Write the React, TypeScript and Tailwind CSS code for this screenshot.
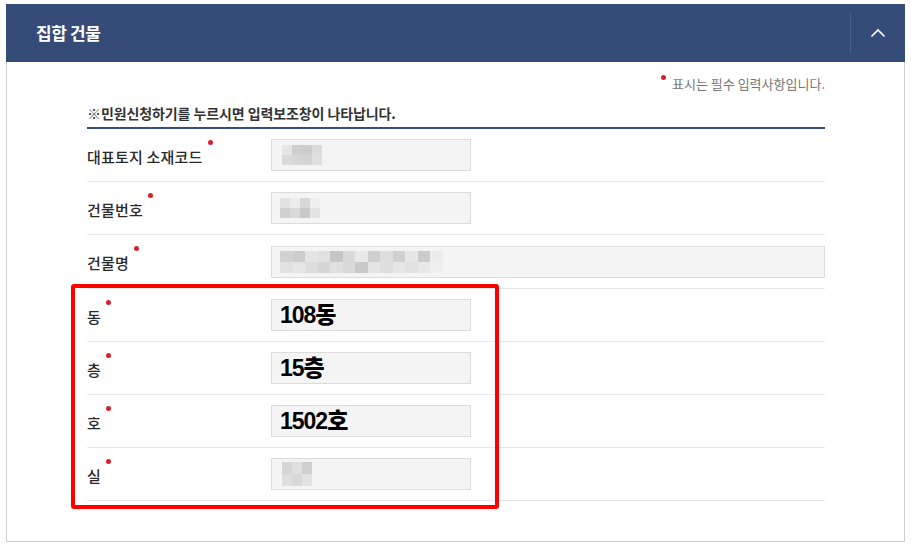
import React from "react";

const KR = { fontFamily: '"Noto Sans CJK KR", "Noto Sans", sans-serif' };

type Block = [number, number, number, number, string];

function Mosaic({ blocks, w, h }: { blocks: Block[]; w: number; h: number }) {
  return (
    <div className="relative" style={{ width: w, height: h }}>
      {blocks.map(([x, y, bw, bh, c], i) => (
        <div key={i} className="absolute" style={{ left: x, top: y, width: bw, height: bh, background: c }} />
      ))}
    </div>
  );
}

function mosaicRow(cols: string[], cell: number, y: number, h: number): Block[] {
  return cols.map((c, i) => [i * cell, y, cell, h, c] as Block);
}

const m1: Block[] = [
  ...mosaicRow(["#e6e6e6", "#cfcfcf", "#cdcdcd", "#dcdcdc"], 10, 0, 10),
  ...mosaicRow(["#dadada", "#d6d6d6", "#d4d4d4", "#e0e0e0"], 10, 10, 10),
];
const m2: Block[] = [
  ...mosaicRow(["#e2e2e2", "#ececec", "#d8d8d8", "#eeeeee"], 10, 0, 10),
  ...mosaicRow(["#cfcfcf", "#d9d9d9", "#c8c8c8", "#e3e3e3"], 10, 10, 10),
];
const m3: Block[] = [
  ...mosaicRow(["#d2d2d2", "#cccccc", "#e4e4e4", "#e0e0e0", "#c6c6c6", "#d8d8d8", "#e8e8e8", "#cfcfcf", "#dedede", "#d0d0d0", "#e6e6e6", "#cbcbcb", "#ececec"], 12.5, 0, 11),
  ...mosaicRow(["#e2e2e2", "#e6e6e6", "#dcdcdc", "#d6d6d6", "#e0e0e0", "#d9d9d9", "#c9c9c9", "#e4e4e4", "#dedede", "#e6e6e6", "#e2e2e2", "#e8e8e8", "#efefef"], 12.5, 11, 11),
];
const m7: Block[] = [
  ...mosaicRow(["#d6d6d6", "#e0e0e0", "#cfcfcf"], 10, 0, 12),
  ...mosaicRow(["#dedede", "#d8d8d8", "#e2e2e2"], 10, 12, 12),
];

function Dot() {
  return <span className="absolute left-[calc(100%+5px)] -top-[6px] h-[5px] w-[5px] rounded-full bg-[#d8202a]" />;
}

function Row({
  label,
  wide,
  tall,
  children,
}: {
  label: string;
  wide?: boolean;
  tall?: boolean;
  children?: React.ReactNode;
}) {
  return (
    <div className={`flex items-center border-b border-[#e8e8e8] ${tall ? "h-[54px]" : "h-[53px]"}`}>
      <div className="w-[184px] pt-[4px] text-[15px] font-medium tracking-[0.2px] text-[#2a2a2a]" style={KR}>
        <span className="relative inline-block leading-[22px]">
          {label}
          <Dot />
        </span>
      </div>
      <div
        className={`flex h-[32px] items-center border border-[#dcdcdc] bg-[#f4f4f4] pl-[8px] ${wide ? "flex-1" : "w-[200px]"}`}
      >
        {children}
      </div>
    </div>
  );
}

function BigVal({ text }: { text: string }) {
  return (
    <span
      className="text-[23px] font-black leading-none tracking-[-1px] text-black"
      style={{ fontFamily: '"Liberation Sans", "Noto Sans CJK KR", sans-serif' }}
    >
      {text}
    </span>
  );
}

export default function App() {
  return (
    <div className="relative min-h-[547px] w-[911px] bg-white pt-[4px]" style={KR}>
      <div className="mx-[6px] border-x border-b border-[#cfcfcf]">
        {/* Header */}
        <div className="flex h-[58px] items-center bg-[#344c77] -mx-px">
          <div className="flex-1 pl-[30px] text-[17px] font-bold tracking-[-0.4px] text-white">집합 건물</div>
          <div className="h-[40px] w-px bg-[#4a6190]" />
          <div className="flex w-[54px] items-center justify-center">
            <svg width="16" height="10" viewBox="0 0 16 10" fill="none">
              <path d="M1.5 8.5 L8 2 L14.5 8.5" stroke="white" strokeWidth="1.6" />
            </svg>
          </div>
        </div>

        {/* Body */}
        <div className="pl-[80px] pr-[79px] pb-[40px] pt-[12px]">
          <div className="flex h-[20px] items-center justify-end text-[13px] text-[#777]">
            <span className="relative mr-[2px]">
              <span className="absolute -left-[9px] -top-[9px] h-[5px] w-[5px] rounded-full bg-[#d8202a]" />
            </span>
            <span>표시는 필수 입력사항입니다.</span>
          </div>
          <div className="mt-[12px] flex h-[23px] items-end border-b-2 border-[#344c77] pb-[3px] text-[14px] font-bold tracking-[-0.1px] text-[#333]">
            ※민원신청하기를 누르시면 입력보조창이 나타납니다.
          </div>

          <Row label="대표토지 소재코드">
            <div className="pl-[2px]">
              <Mosaic blocks={m1} w={40} h={20} />
            </div>
          </Row>
          <Row label="건물번호">
            <Mosaic blocks={m2} w={40} h={20} />
          </Row>
          <Row label="건물명" wide tall>
            <Mosaic blocks={m3} w={163} h={22} />
          </Row>
          <Row label="동">
            <BigVal text="108동" />
          </Row>
          <Row label="층">
            <BigVal text="15층" />
          </Row>
          <Row label="호">
            <BigVal text="1502호" />
          </Row>
          <Row label="실">
            <div className="pl-[2px]">
              <Mosaic blocks={m7} w={30} h={24} />
            </div>
          </Row>
        </div>
      </div>

      {/* Red highlight annotation */}
      <div className="pointer-events-none absolute left-[71px] top-[284px] h-[225px] w-[428px] rounded-[3px] border-[4px] border-[#ff0000]" />
    </div>
  );
}
